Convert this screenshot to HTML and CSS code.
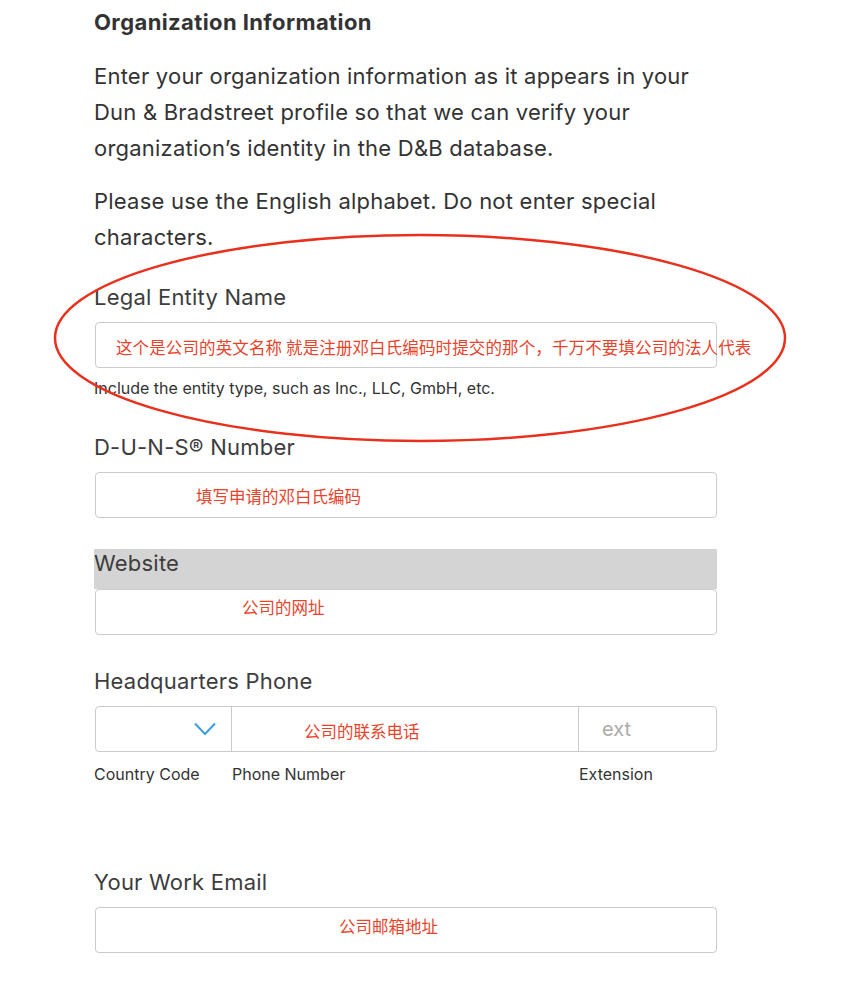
FILE: index.html
```html
<!DOCTYPE html>
<html lang="en">
<head>
    <meta charset="UTF-8">
    <meta name="viewport" content="width=device-width, initial-scale=1.0">
    <title>Organization Information</title>
    <link rel="stylesheet" href="styles.css">
</head>
<body>
    <div class="page">
        <h2>Organization Information</h2>
        <p class="intro">Enter your organization information as it appears in your Dun &amp; Bradstreet profile so that we can verify your organization’s identity in the D&amp;B database.</p>
        <p class="intro second">Please use the English alphabet. Do not enter special characters.</p>

        <div class="field first-field">
            <label>Legal Entity Name</label>
            <div class="input"><span class="note note-legal">这个是公司的英文名称 就是注册邓白氏编码时提交的那个，千万不要填公司的法人代表</span></div>
            <div class="input-help">Include the entity type, such as Inc., LLC, GmbH, etc.</div>
        </div>

        <div class="field duns-field">
            <label>D-U-N-S® Number</label>
            <div class="input"><span class="note note-duns">填写申请的邓白氏编码</span></div>
        </div>

        <div class="field website-field">
            <label class="highlight">Website</label>
            <div class="input"><span class="note note-web">公司的网址</span></div>
        </div>

        <div class="field phone-field">
            <label>Headquarters Phone</label>
            <div class="phone-row">
                <div class="cell country">
                    <svg width="22" height="14" viewBox="0 0 22 14" fill="none" stroke="#3d9edc" stroke-width="2">
                        <polyline points="1 1.5 11 12 21 1.5"></polyline>
                    </svg>
                </div>
                <div class="cell number"><span class="note note-phone">公司的联系电话</span></div>
                <div class="cell ext">ext</div>
            </div>
            <div class="phone-labels">
                <span class="sub country-label">Country Code</span>
                <span class="sub number-label">Phone Number</span>
                <span class="sub">Extension</span>
            </div>
        </div>

        <div class="field email-field">
            <label>Your Work Email</label>
            <div class="input"><span class="note note-email">公司邮箱地址</span></div>
        </div>

        <svg class="circle-mark" width="740" height="214" viewBox="0 0 740 214">
            <ellipse cx="370" cy="106" rx="365" ry="103" fill="none" stroke="#e9301c" stroke-width="2.5"></ellipse>
        </svg>
    </div>
</body>
</html>
```

FILE: styles.css
```css
body {
    margin: 0;
    background: #fff;
    font-family: Inter, "Liberation Sans", "Noto Sans CJK SC", sans-serif;
    color: #333;
}

.page {
    position: relative;
    width: 623px;
    padding: 8px 0 40px 94px;
}

h2 {
    margin: 0;
    font-size: 22px;
    line-height: 28px;
    font-weight: 700;
    letter-spacing: 0.4px;
    color: #333;
}

.intro {
    margin: 22px 0 0;
    max-width: 615px;
    font-size: 22px;
    line-height: 36px;
    letter-spacing: 0.22px;
    color: #333;
}

.intro.second {
    margin-top: 17px;
}

.field label {
    display: block;
    font-size: 22px;
    line-height: 28px;
    letter-spacing: 0.22px;
    color: #3d3d3d;
    margin-bottom: 11px;
}

.first-field { margin-top: 28px; }
.duns-field { margin-top: 35px; }
.website-field { margin-top: 31px; }
.phone-field { margin-top: 32px; }
.email-field { margin-top: 84px; }

.field label.highlight {
    background: #d4d4d4;
    height: 40px;
    line-height: 29px;
    margin-bottom: 0;
}

.input {
    height: 44px;
    border: 1px solid #cbcbcb;
    border-radius: 4px;
    display: flex;
    align-items: center;
    white-space: nowrap;
    margin-left: 1px;
}

.note {
    font-family: "Noto Sans CJK SC", sans-serif;
    font-size: 16.5px;
    color: #e8432b;
    padding-top: 4px;
}

.note-legal { margin-left: 20px; letter-spacing: 0.12px; }
.note-duns { margin-left: 100px; padding-top: 1px; }
.note-web { margin-left: 146px; padding-top: 0; margin-top: -10px; }
.note-phone { margin-left: 72px; }
.note-email { margin-left: 243px; padding-top: 0; margin-top: -8px; }

.input-help {
    font-size: 16px;
    line-height: 20px;
    color: #333;
    margin-top: 10px;
}

.phone-row {
    display: flex;
    height: 44px;
    border: 1px solid #cbcbcb;
    border-radius: 4px;
    margin-left: 1px;
}

.cell {
    display: flex;
    align-items: center;
}

.country {
    width: 136px;
    border-right: 1px solid #cbcbcb;
    justify-content: flex-end;
    padding-right: 15px;
    box-sizing: border-box;
}

.number {
    width: 346px;
    border-right: 1px solid #cbcbcb;
}

.ext {
    flex: 1;
    padding-left: 23px;
    font-size: 20px;
    color: #aaa;
}

.phone-labels {
    display: flex;
    margin-top: 12px;
}

.sub {
    font-size: 16px;
    line-height: 20px;
    color: #333;
}

.country-label { width: 138px; }
.number-label { width: 347px; }

.circle-mark {
    position: absolute;
    left: 50px;
    top: 232px;
}
```
